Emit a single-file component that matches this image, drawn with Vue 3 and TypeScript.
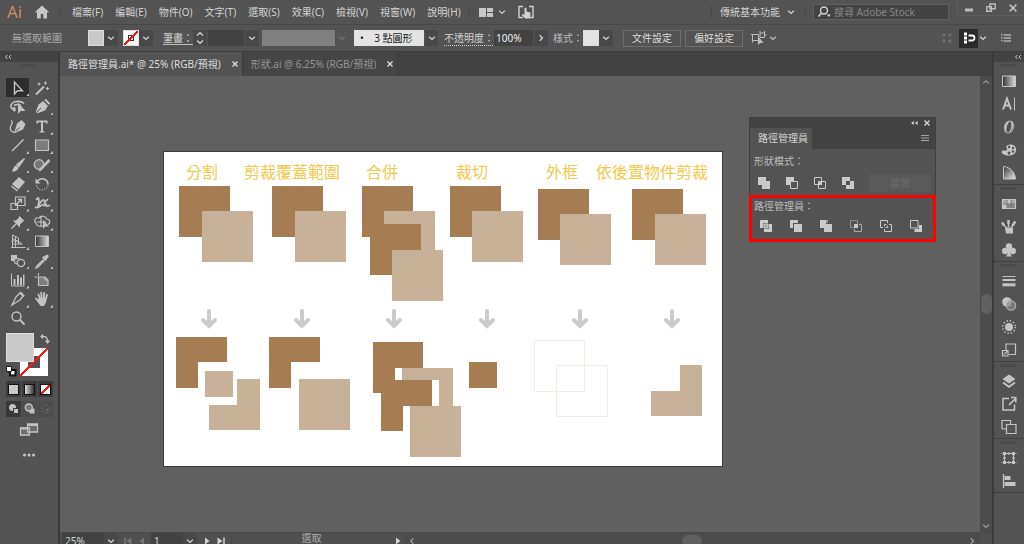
<script setup lang="ts">
import { h, ref } from 'vue'

// Icon bodies, drawn on a square grid whose size is given by the first entry.
const icons: Record<string, [number, string]> = {
  home: [16, '<path d="M8 1.5 0.8 8.2h2.2V14.5h3.7V10h2.6v4.5H13V8.2h2.2z" fill="currentColor"/>'],
  chevron: [8, '<path d="M1.2 2.8 4 5.4 6.8 2.8" fill="none" stroke="currentColor" stroke-width="1.4"/>'],
  chevronUp: [8, '<path d="M1.2 5.4 4 2.8 6.8 5.4" fill="none" stroke="currentColor" stroke-width="1.2"/>'],
  chevronRight: [8, '<path d="M2.8 1.2 5.4 4 2.8 6.8" fill="none" stroke="currentColor" stroke-width="1.4"/>'],
  chevronLeft: [8, '<path d="M5.4 1.2 2.8 4l2.6 2.8" fill="none" stroke="currentColor" stroke-width="1.4"/>'],
  spin: [16, '<path d="M5 5.5 8 2.7l3 2.8M5 10.5l3 2.8 3-2.8" fill="none" stroke="currentColor" stroke-width="1.4"/>'],
  collapse: [8, '<path d="M3.5 2 1.5 4l2 2M7 2 5 4l2 2" fill="none" stroke="currentColor" stroke-width="1"/>'],
  rewind: [8, '<path d="M3.8 2v4L1 4zM7.6 2v4L4.8 4z" fill="currentColor"/>'],
  close: [8, '<path d="M1.5 1.5l5 5M6.5 1.5l-5 5" stroke="currentColor" stroke-width="1.4"/>'],
  minimise: [12, '<path d="M2 6.5h8v3H2z" fill="currentColor"/>'],
  restore: [12, '<path d="M4.8 2h5.4v4.8H4.8zM1.8 4.6h4.6v4.6H1.8z" fill="none" stroke="currentColor" stroke-width="1.4"/>'],
  winClose: [12, '<path d="M2.6 2.6l6.8 6.8M9.4 2.6 2.6 9.4" stroke="currentColor" stroke-width="1.6"/>'],
  arrange: [16, '<path d="M1 4h7v9H1zM9 4h6v4H9zM9 9h6v4H9z" fill="currentColor"/>'],
  touch: [16, '<path d="M5 2.5H1v11h4M11 2.5h4v11h-4" fill="none" stroke="currentColor" stroke-width="1.4"/><path d="M6.500 4q1-1 2 0v3.500l4 1v3L11 14.500H7L3.800 11l1-1 1.700 1z" fill="currentColor"/>'],
  search: [14, '<circle cx="7" cy="5.500" r="3.500" fill="none" stroke="currentColor" stroke-width="1.400"/><path d="M4.500 8 1.500 11.500" stroke="currentColor" stroke-width="1.600"/><path d="M9.800 9.500h4L11.800 12z" fill="currentColor"/>'],
  nudge: [16, '<path d="M1.500 4.500h6v6h-6zM9 3h4.500v4.500H9z" fill="none" stroke="currentColor"/><path d="M0 4.500h3M1.500 10.500v2M9 1v2M13.500 1v2M13.500 5h2" stroke="currentColor"/><path d="M7 6v9l2.300-2h3.200z" fill="currentColor"/>'],
  dots4: [12, '<path d="M1.500 1.500h3v3h-3zM7.500 1.500h3v3h-3zM1.500 7.500h3v3h-3zM7.500 7.500h3v3h-3z" fill="currentColor"/>'],
  magnet: [16, '<path d="M3 2.500h3v3H3zM3 6.500h3v3H3zM3 10.500h3v3H3z" fill="currentColor"/><path d="M7.500 5.500h3.500a2.500 2.500 0 0 1 0 5h-3.500" fill="none" stroke="currentColor" stroke-width="1.800"/>'],
  list: [12, '<path d="M1 2.500h1.500M1 5.500h1.500M1 8.500h1.500M3.500 3h7.500M3.500 6h7.500M3.500 9h7.500" stroke="currentColor" stroke-width="1.300"/>'],
  menu: [12, '<path d="M2 2.500h8M2 5h8M2 7.500h8" stroke="currentColor"/>'],
  // tools
  select: [18, '<path d="M5.500 3v12l3-3.300h5z" fill="none" stroke="currentColor" stroke-width="1.400"/>'],
  wand: [18, '<path d="M3 15.500 11 7.500" stroke="currentColor" stroke-width="2"/><path d="M12.500 2.500v3M11 4h3M6 3.500v3M4.500 5h3M14.500 8v3M13 9.500h3" stroke="currentColor" stroke-width="1.200"/>'],
  lasso: [18, '<path d="M6 12.500C1 11 1 7 3.500 5S12 2.500 15 5.500M5 13.500c2-2 1-4-1-3.500M5 7.500c3-2 5-1 7 0" fill="none" stroke="currentColor" stroke-width="1.600"/><path d="M9 4.500v11.500l2.800-3H16.500z" fill="currentColor"/>'],
  pen: [18, '<path d="M10 3 15 8 12 12.500 4 15.500 2.500 14.500 5.500 6.500z" fill="currentColor"/><path d="M3 15 8 10" stroke="#535353"/><path d="M12 1.500 16.500 6" stroke="currentColor" stroke-width="2"/>'],
  curve: [18, '<path d="M12.500 3 16.500 7 14 12.500 7 15.500 5.500 14.500 8 6.500z" fill="currentColor"/><path d="M6 15 10.500 10.500" stroke="#535353"/><path d="M2 3.500c4 2-3 6 0 10 1 2 3 2 5 1.500" fill="none" stroke="currentColor" stroke-width="1.300"/>'],
  type: [18, '<path d="M3.500 3.500h11v3.200h-1.200l-.5-1.500H10v8.800l1.500.5v1h-5v-1l1.500-.5V5.200H5.200l-.5 1.500H3.500z" fill="currentColor"/>'],
  line: [18, '<path d="M3 15 14.500 3.500" stroke="currentColor" stroke-width="1.400"/>'],
  rect: [18, '<path d="M2.500 4h13v10.500h-13z" fill="#7c7c7c" stroke="currentColor" stroke-width="1.200"/>'],
  brush: [18, '<path d="M15.500 2.500 8 8.500l2 2z" stroke="currentColor" stroke-width="1.300" fill="currentColor"/><path d="M7.300 9.200 9.500 11.400C9 14.500 6 16 2.500 15.500 4.500 14 4 10.500 7.300 9.200z" fill="currentColor"/>'],
  blob: [18, '<circle cx="6" cy="8.500" r="4.800" fill="#777" stroke="currentColor" stroke-width="1.300"/><path d="M16.500 4 8 13 6 14.500" stroke="currentColor" stroke-width="2.600"/>'],
  eraser: [18, '<path d="M10 2 16 7 9.500 14.500 3 9z" fill="currentColor"/><path d="M2.500 11 8.500 16" stroke="currentColor" stroke-width="1.600"/>'],
  rotate: [18, '<path d="M4.500 6C9 1.500 15 4.500 15 9.500" fill="none" stroke="currentColor" stroke-width="1.500"/><path d="M15 10c-1 6-10 7-12-.5" fill="none" stroke="currentColor" stroke-width="1.300" stroke-dasharray="1 1.500"/><path d="M2.500 3.500v5h5z" fill="currentColor"/>'],
  scale: [18, '<path d="M6.500 3h9.500v8.500H6.500zM2 9.500h6.500v6H2z" fill="none" stroke="currentColor" stroke-width="1.200"/><path d="M7 10.500l5-4.500M9 5.500h3.500V9" stroke="currentColor" fill="none" stroke-width="1.300"/>'],
  width: [18, '<path d="M3 6c4-4 3 3 2 6 2-1 2-5 5-6 3-1 0 6 4 4M2 13c3 2 5-1 7-2s5 3 8 0M12 8l3-3" fill="none" stroke="currentColor" stroke-width="1.700"/><circle cx="5" cy="4.500" r="1.500" fill="currentColor"/>'],
  pin: [18, '<path d="M10 2.500l5.500 5.500-1.500.5L11 11.500v3L4 7.500h3L10 4.500z" fill="currentColor"/><path d="M2.500 15.500 8 10" stroke="currentColor" stroke-width="1.500"/>'],
  shape: [18, '<path d="M3 10C0 7 3 4 6 5c2-3 7-2 7.500 1 4 0 4 5 1 5.500M3 10c0 3 4 4 7 3M4 9h9M8 4v9" fill="none" stroke="currentColor" stroke-width="1.200"/><path d="M10 7v9l2.300-2.500H16z" fill="currentColor"/>'],
  perspective: [18, '<path d="M3.500 3v12M3.500 3l6 3v6M3.500 6.500l9 5M2 15.500h14.500M3.500 12h10M6.500 5v10M2.500 9h7" fill="none" stroke="currentColor"/>'],
  gradient: [18, '<path d="M2.500 4h13v10.500h-13z" fill="url(#ramp)" stroke="currentColor"/>'],
  blend: [18, '<path d="M2 3h6v6H2z" fill="currentColor"/><circle cx="8" cy="9" r="3" fill="#777" stroke="currentColor"/><circle cx="12" cy="11" r="3.600" fill="#535353" stroke="currentColor" stroke-width="1.300"/>'],
  dropper: [18, '<path d="M10.500 7.500 4 14l-1 2 2-1 6.500-6.500" fill="none" stroke="currentColor" stroke-width="1.300"/><path d="M9 5.500 10.500 4 14 7.500 12.500 9zM11 5l2.500-2.500q3 .5 2 2.500L13.500 7.500z" fill="currentColor"/>'],
  graph: [18, '<path d="M2.500 2.500v12.500h13" fill="none" stroke="currentColor"/><path d="M4.500 8h2v6h-2zM8 4h2v10H8zM11 6.500h2v7.500h-2zM14 3.500h1.500V14H14z" fill="currentColor"/>'],
  artboard: [18, '<path d="M5.500 6H12l3 3v5.500H5.500z" fill="#7c7c7c" stroke="currentColor" stroke-width="1.200"/><path d="M1.500 6h3M5.500 2v3M12 6v3h3" stroke="currentColor" fill="none"/>'],
  slice: [18, '<path d="M11.500 2.500l3 3L11 10 6 13l-3 2 2-4 2-4z" fill="none" stroke="currentColor" stroke-width="1.300"/><path d="M11 2.500 15 6.500" stroke="currentColor" stroke-width="2.200"/>'],
  hand: [18, '<path d="M5.500 4.500 7 9M8.200 2.800 8.700 9M11.200 3l-.4 6M14 5l-1.500 5M3 8.500 6 12" stroke="currentColor" stroke-width="1.900" stroke-linecap="round"/><path d="M6 8h7.500L13 12.500 11 16H7.500L4 11z" fill="currentColor"/>'],
  zoom: [18, '<circle cx="7.500" cy="7.500" r="4.500" fill="none" stroke="currentColor" stroke-width="1.400"/><path d="M11 11l4.500 4.500" stroke="currentColor" stroke-width="2"/>'],
  swap: [12, '<path d="M3 3.500c4-.5 5.500 1 5.500 5" fill="none" stroke="currentColor" stroke-width="1.500"/><path d="M4 .8v5.400L1 3.500zM5.800 7.500h5.400L8.500 11z" fill="currentColor"/>'],
  defaults: [12, '<path d="M5 5h5.500v5.500H5z" fill="#fff" stroke="#111" stroke-width="2"/><path d="M1.500 1.500h5v5h-5z" fill="#fff" stroke="#222"/>'],
  drawNormal: [16, '<circle cx="6.500" cy="6.500" r="3.500" fill="currentColor"/><path d="M7.500 7.500h5v5h-5z" fill="currentColor" stroke="#3a3a3a"/>'],
  drawBehind: [16, '<path d="M7.500 7.500h5v5h-5z" fill="currentColor"/><circle cx="6.800" cy="6.500" r="3.500" fill="#777" stroke="currentColor" stroke-width="1.400"/>'],
  drawInside: [16, '<circle cx="8" cy="8" r="4" fill="none" stroke="currentColor" stroke-dasharray="2 1"/><path d="M8 8h2v2H8z" fill="currentColor"/>'],
  screen: [20, '<path d="M1.500 8h9v7h-9zM8.500 4h10v8h-10z" fill="#6c6c6c" stroke="currentColor" stroke-width="1.300"/><path d="M1 8.500h7M8 5h11" stroke="currentColor" stroke-width="2"/>'],
  more: [16, '<circle cx="3.500" cy="8" r="1.600" fill="currentColor"/><circle cx="8" cy="8" r="1.600" fill="currentColor"/><circle cx="12.500" cy="8" r="1.600" fill="currentColor"/>'],
  // dock
  character: [18, '<path d="M3 14.500 7 3.500l4 11M4.500 10.500h5" fill="none" stroke="currentColor" stroke-width="1.900"/><path d="M14.500 2.500v13" stroke="currentColor"/>'],
  opentype: [18, '<ellipse cx="9" cy="9" rx="4.500" ry="6" transform="rotate(15 9 9)" fill="none" stroke="#999" stroke-width="1.400"/><path d="M10.500 3c4 .5 4 8.500-2.500 12 4-4 4-8 2.500-12zM10 3c-5 0-7.500 9-3 12-1.500-4 0-9 3-12z" fill="currentColor"/>'],
  palette: [18, '<path d="M7 4.500C11 2 16 4 16.200 8.500c.2 4-4 6.500-8.200 6C4 14.500.5 12 2 10c1.500-1.500 4 .5 5-1s-2-3 0-4.500z" fill="currentColor"/><circle cx="9" cy="6" r="1.200" fill="#535353"/><circle cx="13" cy="7" r="1.200" fill="#535353"/><circle cx="13" cy="10.500" r="1.200" fill="#535353"/><circle cx="9" cy="12" r="1.500" fill="#535353"/>'],
  guide: [18, '<path d="M3.500 2.500v12.500h12C15 8 10 3 3.500 2.500z" fill="url(#fan)" stroke="currentColor"/>'],
  swatches: [18, '<path d="M2.500 4.500h13v9h-13z" fill="#888" stroke="currentColor" stroke-width="1.200"/><path d="M3 5h4v4H3zM11.500 5h3.500v4h-3.500z" fill="#aaa"/><path d="M7 5h4v4H7zM3 9h4v4H3z" fill="#c4c4c4"/><path d="M3 9h12M7 5v8M11.200 5v8" stroke="#777"/>'],
  brushes: [18, '<path d="M5 9.500h8v6h-7z" fill="currentColor"/><path d="M6.500 10 3 6M8.500 9V5M11 9.500l3.500-4.500" stroke="currentColor" stroke-width="1.400"/><path d="M4 7.500 2 4.500M8.500 6V2M12.500 7.500l3-4" stroke="currentColor" stroke-width="2.400"/>'],
  club: [18, '<circle cx="9" cy="5.500" r="3.200" fill="currentColor"/><circle cx="5.200" cy="10" r="3.200" fill="currentColor"/><circle cx="12.800" cy="10" r="3.200" fill="currentColor"/><path d="M8 7h2v5l2 3.500H6L8 12z" fill="currentColor"/>'],
  stroke: [18, '<path d="M2.500 4.500h13" stroke="currentColor" stroke-width="1"/><path d="M2.500 8h13" stroke="currentColor" stroke-width="2"/><path d="M2.500 12.800h13" stroke="currentColor" stroke-width="3"/>'],
  transparency: [18, '<circle cx="7" cy="7" r="4.800" fill="currentColor"/><circle cx="11" cy="10.500" r="4.700" fill="#8c8c8c" fill-opacity=".7" stroke="#aaa" stroke-width="1.200"/>'],
  appearance: [18, '<circle cx="9" cy="9" r="4" fill="currentColor"/><circle cx="9" cy="9" r="6.300" fill="none" stroke="currentColor" stroke-width="1.500" stroke-dasharray="1.300 2"/>'],
  styles: [18, '<path d="M6 9V3h9.500v10.500H9M2.500 9.500H8V15H2.500z" fill="none" stroke="currentColor" stroke-width="1.200"/><path d="M4 13.500l4-4" fill="none" stroke="currentColor" stroke-width="1.100"/>'],
  layers: [18, '<path d="M9 2.500 15.500 7 9 11.500 2.500 7z" fill="currentColor"/><path d="M3 10.500 9 14.800l6-4.300" fill="none" stroke="currentColor" stroke-width="1.900"/>'],
  assets: [18, '<path d="M9 3.500H3v11.500h11.500V9.500" fill="none" stroke="currentColor" stroke-width="1.500"/><path d="M9 10l6-6M11 2.500h4.700v5" fill="none" stroke="currentColor" stroke-width="1.700"/>'],
  artboards: [18, '<path d="M6 11H2V2.500h8.500V6M6.500 6.500H16v9H6.500z" fill="none" stroke="currentColor" stroke-width="1.200"/>'],
  transform: [18, '<path d="M4.500 4.500h9v9h-9z" fill="none" stroke="currentColor" stroke-width="1.200"/><path d="M3 3h3v3H3zM12 3h3v3h-3zM3 12h3v3H3zM12 12h3v3h-3zM8 3.500h2v2H8zM8 12.500h2v2H8zM3.500 8h2v2h-2zM12.500 8h2v2h-2zM1.500 4h1v1h-1zM15.500 4h1v1h-1zM1.500 13h1v1h-1zM15.500 13h1v1h-1z" fill="currentColor"/>'],
  align: [18, '<path d="M3.500 2v14" stroke="currentColor" stroke-width="1.300"/><path d="M4.500 4h6v4h-6zM4.500 10h11v4h-11z" fill="currentColor"/>'],
  // pathfinder operations
  unite: [12, '<path d="M0 0h8v4h4v8H4V8H0z" fill="currentColor"/>'],
  minusFront: [12, '<path d="M0 0h8v4H4v4H0z" fill="currentColor"/><path d="M4.500 4.500h7v7h-7z" fill="none" stroke="currentColor"/>'],
  intersect: [12, '<path d="M.5.500h7v7h-7zM4.500 4.500h7v7h-7z" fill="none" stroke="currentColor"/><path d="M5 5h3v3H5z" fill="currentColor"/>'],
  exclude: [12, '<path d="M0 0h8v4h4v8H4V8H0zM4 4v4h4V4z" fill="currentColor" fill-rule="evenodd"/>'],
  divide: [12, '<path d="M0 0h8v3H3v5H0zM12 12H4V9h5V4h3z" fill="currentColor"/><path d="M3.500 3.500h5v5h-5z" fill="#999" stroke="#5c5c5c"/><path d="M4 4h4v4H4z" fill="#a8a8a8" stroke="currentColor"/>'],
  trim: [12, '<path d="M0 0h8v3H3v5H0zM4 4h8v8H4z" fill="currentColor"/>'],
  merge: [12, '<path d="M0 0h6v4h6v8H4V8H0z" fill="currentColor"/><path d="M6 0h2v3H6z" fill="#999"/>'],
  crop: [12, '<path d="M.5.500h7v7h-7z" fill="none" stroke="#909090"/><path d="M9 4.500h2.500v7h-7V9" fill="none" stroke="#aaa"/><path d="M4 4h4v4H4z" fill="currentColor"/>'],
  outline: [12, '<path d="M3 7.500H.5v-7h7V3M9 4.500h2.500v7h-7V9M4.500 6.500v-2h2M7.500 5.500v2h-2" fill="none" stroke="currentColor"/>'],
  minusBack: [12, '<path d="M.5.500h7.500v7.500H.5z" fill="none" stroke="currentColor"/><path d="M9 5h3v7H4.500V9H9z" fill="currentColor"/>'],
  first: [10, '<path d="M2 1.500v7" stroke="currentColor" stroke-width="1.500"/><path d="M8.500 1.500v7L3.500 5z" fill="currentColor"/>'],
  prev: [10, '<path d="M7 1.500v7L2.500 5z" fill="currentColor"/>'],
  next: [10, '<path d="M3 1.500v7L7.500 5z" fill="currentColor"/>'],
  last: [10, '<path d="M8 1.500v7" stroke="currentColor" stroke-width="1.500"/><path d="M1.500 1.500v7l5-3.500z" fill="currentColor"/>'],
}

const Icon = (props: { name: string; size?: number }) => {
  const [grid, body] = icons[props.name]
  const side = props.size ?? grid
  return h('svg', { viewBox: `0 0 ${grid} ${grid}`, width: side, height: side, 'aria-hidden': 'true', innerHTML: body })
}
Icon.props = ['name', 'size']

const menus = ['檔案(F)', '編輯(E)', '物件(O)', '文字(T)', '選取(S)', '效果(C)', '檢視(V)', '視窗(W)', '說明(H)']

const tools = [
  'select', 'wand', 'lasso', 'pen', 'curve', 'type', 'line', 'rect', 'brush', 'blob', 'eraser', 'rotate', 'scale',
  'width', 'pin', 'shape', 'perspective', 'gradient', 'blend', 'dropper', 'graph', 'artboard', 'slice', 'hand', 'zoom',
]
const plainTools = ['wand', 'lasso', 'curve', 'gradient', 'artboard', 'zoom']
const activeTool = ref('select')

const dock = [
  ['gradient', 'character', 'opentype', 'palette', 'guide'],
  ['swatches', 'brushes', 'club'],
  ['stroke', 'transparency', 'appearance', 'styles'],
  ['layers', 'assets', 'artboards'],
  ['transform', 'align'],
]

const shapeModes = ['unite', 'minusFront', 'intersect', 'exclude']
const pathfinders = ['divide', 'trim', 'merge', 'crop', 'outline', 'minusBack']

const labels = [
  { x: 38, text: '分割' },
  { x: 128, text: '剪裁覆蓋範圍' },
  { x: 218, text: '合併' },
  { x: 308, text: '裁切' },
  { x: 398, text: '外框' },
  { x: 488, text: '依後置物件剪裁' },
]
const arrows = [45, 138, 230, 323, 416, 508]
const squares = [
  { x: 15, y: 34, tone: 'dark' }, { x: 38, y: 59, tone: 'light' },
  { x: 108, y: 34, tone: 'dark' }, { x: 131, y: 59, tone: 'light' },
  { x: 198, y: 34, tone: 'dark' }, { x: 220, y: 59, tone: 'light' },
  { x: 206, y: 72, tone: 'dark' }, { x: 228, y: 98, tone: 'light' },
  { x: 286, y: 34, tone: 'dark' }, { x: 308, y: 59, tone: 'light' },
  { x: 374, y: 37, tone: 'dark' }, { x: 396, y: 62, tone: 'light' },
  { x: 468, y: 37, tone: 'dark' }, { x: 491, y: 62, tone: 'light' },
  { x: 135, y: 227, tone: 'light' },
]
</script>

<template>
  <div class="app">
    <svg class="defs" width="0" height="0" aria-hidden="true">
      <defs>
        <linearGradient id="ramp"><stop offset="0" stop-color="#333" /><stop offset="1" stop-color="#ddd" /></linearGradient>
        <linearGradient id="fan" x1="0" y1="0" x2="1" y2="1"><stop offset="0" stop-color="#333" /><stop offset="1" stop-color="#eee" /></linearGradient>
      </defs>
    </svg>

    <header class="menubar">
      <span class="logo">Ai</span>
      <button class="home" aria-label="首頁"><Icon name="home" /></button>
      <nav class="menus">
        <a v-for="m in menus" :key="m" href="#">{{ m }}</a>
      </nav>
      <button class="arrange" aria-label="排列文件"><Icon name="arrange" /><Icon name="chevron" /></button>
      <button aria-label="觸控工作區"><Icon name="touch" /></button>
      <button class="workspace">傳統基本功能<Icon name="chevron" /></button>
      <label class="search"><Icon name="search" /><input type="search" placeholder="搜尋 Adobe Stock" aria-label="搜尋 Adobe Stock" /></label>
      <div class="window">
        <button aria-label="最小化"><Icon name="minimise" /></button>
        <button aria-label="還原"><Icon name="restore" /></button>
        <button aria-label="關閉"><Icon name="winClose" /></button>
      </div>
    </header>

    <section class="controls" aria-label="控制">
      <span class="state">無選取範圍</span>
      <button class="swatch" aria-label="填色"><i class="chip grey"></i><b class="drop"><Icon name="chevron" /></b></button>
      <button class="swatch" aria-label="筆畫顏色"><i class="chip none"></i><b class="drop"><Icon name="chevron" /></b></button>
      <label class="name strong" for="weight">筆畫：</label>
      <div class="weight">
        <button class="drop" aria-label="調整筆畫"><Icon name="spin" /></button>
        <input id="weight" type="text" />
        <button class="drop" aria-label="筆畫寬度"><Icon name="chevron" /></button>
      </div>
      <button class="swatch profile" disabled aria-label="寬度描述檔"><i></i><b class="drop"><Icon name="chevron" /></b></button>
      <div class="combo brushes">
        <select aria-label="筆刷定義"><option>•&nbsp;&nbsp;&nbsp; 3 點圓形</option></select>
        <b class="drop"><Icon name="chevron" /></b>
      </div>
      <label class="name dotted" for="opacity">不透明度：</label>
      <div class="opacity">
        <input id="opacity" type="text" value="100%" />
        <button class="drop" aria-label="不透明度滑桿"><Icon name="chevronRight" /></button>
      </div>
      <span class="name style">樣式：</span>
      <button class="swatch" aria-label="樣式"><i class="chip pale"></i><b class="drop"><Icon name="chevron" /></b></button>
      <button class="action first">文件設定</button>
      <button class="action">偏好設定</button>
      <button class="nudge" aria-label="選取類似物件"><Icon name="nudge" /><Icon name="chevron" /></button>
      <div class="ends">
        <span class="faint"><Icon name="dots4" /></span>
        <button class="magnet" aria-label="靠齊"><Icon name="magnet" /></button>
        <button aria-label="靠齊選項"><Icon name="chevron" /></button>
        <button class="list" aria-label="選單"><Icon name="list" /></button>
      </div>
    </section>

    <main class="body">
      <aside class="toolbox">
        <div class="strip"><Icon name="collapse" /></div>
        <div class="grip"></div>
        <div class="tools">
          <button
            v-for="t in tools" :key="t" :aria-label="t"
            :class="{ active: t === activeTool, nested: !plainTools.includes(t) }" @click="activeTool = t"
          ><Icon :name="t" /></button>
        </div>
        <div class="paint">
          <button class="stroke-well" aria-label="筆畫"></button>
          <button class="fill-well" aria-label="填色"></button>
          <button class="swap" aria-label="切換"><Icon name="swap" /></button>
          <button class="defaults" aria-label="預設"><Icon name="defaults" /></button>
        </div>
        <div class="trio modes">
          <button aria-label="顏色"><i class="m-color"></i></button>
          <button aria-label="漸層"><i class="m-ramp"></i></button>
          <button aria-label="無"><i class="m-none"></i></button>
        </div>
        <div class="trio draw">
          <button class="on" aria-label="一般繪製"><Icon name="drawNormal" /></button>
          <button aria-label="繪製下層"><Icon name="drawBehind" /></button>
          <button class="off" aria-label="繪製內側"><Icon name="drawInside" /></button>
        </div>
        <button class="wide" aria-label="螢幕模式"><Icon name="screen" /></button>
        <button class="wide more" aria-label="編輯工具列"><Icon name="more" /></button>
      </aside>

      <section class="document">
        <div class="tabs">
          <div class="tab current"><span>路徑管理員.ai* @ 25% (RGB/預視)</span><button aria-label="關閉"><Icon name="close" /></button></div>
          <div class="tab"><span>形狀.ai @ 6.25% (RGB/預視)</span><button aria-label="關閉"><Icon name="close" /></button></div>
        </div>

        <div class="viewport">
          <div class="canvas">
            <svg class="artboard" viewBox="0 0 558 314" width="558" height="314" role="img" aria-label="路徑管理員">
              <text v-for="l in labels" :key="l.text" :x="l.x" y="26" class="label">{{ l.text }}</text>
              <rect v-for="(s, i) in squares" :key="i" :x="s.x" :y="s.y" width="51" height="51" :class="s.tone" />
              <path v-for="a in arrows" :key="a" class="arrow" :d="`M${a} 159v14M${a - 6} 168l6 6 6-6`" />
              <path class="dark" d="M12 185h51v25H34v26H12zM105 185h51v25h-29v26h-22z" />
              <path class="light" d="M41 219h28v26H41zM73 227h23v51H45v-25h28z" />
              <path class="dark" d="M209 190h50v26h-28v12h37v26h-29v25h-22v-38h-8z" />
              <path class="light" d="M238 216h51v38h8v51h-51v-51h29v-26h-37z" />
              <path class="dark" d="M305 210h28v26h-28z" />
              <path class="thin" d="M370.500 188.500h50v51h-50zM392.500 213.500h51v51h-51z" />
              <path class="light" d="M516 213h22v51h-51v-25h29z" />
            </svg>

            <section class="panel" aria-label="路徑管理員">
              <div class="panel-top">
                <button aria-label="收合"><Icon name="rewind" /></button>
                <button aria-label="關閉"><Icon name="close" /></button>
              </div>
              <div class="panel-tabs">
                <span class="panel-tab">路徑管理員</span>
                <button aria-label="面板選單"><Icon name="menu" /></button>
              </div>
              <div class="panel-group">
                <h3>形狀模式：</h3>
                <div class="ops modes-row">
                  <button v-for="s in shapeModes" :key="s" :aria-label="s"><Icon :name="s" /></button>
                  <button class="expand" disabled>展開</button>
                </div>
              </div>
              <div class="panel-group marked">
                <h3>路徑管理員：</h3>
                <div class="ops finder-row">
                  <button v-for="p in pathfinders" :key="p" :aria-label="p"><Icon :name="p" /></button>
                </div>
              </div>
            </section>
          </div>
          <div class="vscroll"><Icon name="chevronUp" /><i></i><Icon name="chevron" /></div>
        </div>

        <footer class="status">
          <div class="status-row">
            <div class="combo zoom"><select aria-label="縮放"><option>25%</option></select><b class="drop"><Icon name="chevron" /></b></div>
            <button class="dim" aria-label="第一個"><Icon name="first" /></button>
            <button class="dim" aria-label="上一個"><Icon name="prev" /></button>
            <div class="combo page"><select aria-label="工作區域"><option>1</option></select><b class="drop"><Icon name="chevron" /></b></div>
            <button aria-label="下一個"><Icon name="next" /></button>
            <button aria-label="最後一個"><Icon name="last" /></button>
            <span class="mode">選取</span>
            <button class="play" aria-label="狀態選單"><Icon name="next" /></button>
            <div class="hscroll"><Icon name="chevronLeft" /><i></i><Icon name="chevronRight" /></div>
          </div>
        </footer>
      </section>

      <aside class="dock">
        <div class="strip"><Icon name="collapse" /></div>
        <div v-for="(group, i) in dock" :key="i" class="dock-group">
          <div class="grip"></div>
          <button v-for="d in group" :key="d" :aria-label="d"><Icon :name="d" /></button>
        </div>
      </aside>
    </main>
  </div>
</template>

<style>
body { background: #535353; overflow: hidden; }
</style>

<style scoped>
.app { display: flex; flex-direction: column; height: 100vh; overflow: hidden; background: #535353; color: #d2d2d2; font: 10px/14px "Noto Sans", "Noto Sans CJK TC", sans-serif; }
.app * { box-sizing: border-box; }
.defs { position: absolute; }
button, input, select { font: inherit; color: inherit; background: none; border: 0; padding: 0; margin: 0; border-radius: 0; outline: 0; }
button { display: flex; align-items: center; justify-content: center; flex: none; }
a { color: inherit; text-decoration: none; white-space: nowrap; }
svg { flex: none; display: block; }

.menubar { display: flex; align-items: center; height: 25px; flex: none; border-bottom: 1px solid #474747; padding-left: 7px; }
.logo { width: 27px; font: 17px/22px "Open Sans", sans-serif; color: #cf8d67; }
.home { width: 16px; color: #c8c8c8; }
.menus { display: flex; gap: 12px; margin-left: 9px; padding: 0 8px 0 12px; border-left: 1px solid #484848; border-right: 1px solid #484848; }
.arrange { margin: 0 12px 0 8px; gap: 4px; color: #c8c8c8; }
.workspace { margin-left: auto; gap: 7px; padding: 0 10px 0 8px; border-left: 1px solid #484848; border-right: 1px solid #484848; }
.search { display: flex; align-items: center; width: 136px; height: 16px; margin: 0 8px 0 7px; padding-left: 3px; gap: 3px; background: #434343; border: 1px solid #606060; }
.search input { width: 100%; min-width: 0; }
.search input::placeholder { color: #868686; opacity: 1; }
.window { display: flex; align-items: flex-end; align-self: flex-start; border: 1px solid #5e5e5e; border-top: 0; border-right: 0; height: 16px; color: #bdbdbd; }
.window button { width: 22px; height: 15px; }

.controls { display: flex; align-items: center; height: 27px; flex: none; border-bottom: 1px solid #3c3c3c; padding-left: 12px; white-space: nowrap; }
.state { width: 76px; color: #a9a9a9; }
.drop { display: flex; align-items: center; justify-content: center; width: 14px; height: 16px; background: #484848; flex: none; }
.swatch { height: 16px; margin-right: 5px; }
.chip { width: 16px; height: 16px; border: 1px solid #dedede; background: #c9c9c9; }
.chip.pale { background: #e3e3e3; }
.chip.none { background: linear-gradient(to bottom right, transparent 45%, #f01818 45% 55%, transparent 55%), linear-gradient(#fff, #fff) center / 4px 4px no-repeat, linear-gradient(#333, #333) center / 6px 6px no-repeat, #fff; }
.name { color: #bcbcbc; }
.strong { margin-left: 5px; width: 30px; font-weight: bold; text-decoration: underline; text-underline-offset: 2px; }
.weight, .opacity { display: flex; gap: 1px; height: 16px; }
.weight input { width: 36px; background: #424242; }
.weight { margin-right: 3px; }
.profile i { width: 73px; height: 16px; background: #808080; }
.profile .drop { background: none; color: #747474; }
.combo { position: relative; height: 16px; flex: none; }
.combo select { appearance: none; width: 100%; height: 16px; padding: 0 16px 0 3px; line-height: 16px; }
.combo .drop { position: absolute; right: 0; top: 0; }
.brushes { width: 84px; margin-right: 6px; }
.brushes select { background: #e3e3e3; color: #222; padding-left: 6px; }
.brushes .drop { border-left: 1px solid #535353; }
.dotted { width: 50px; text-decoration: underline dotted; text-underline-offset: 3px; color: #d2d2d2; }
.opacity input { width: 39px; background: #424242; padding-left: 2px; color: #eee; }
.style { margin-left: 5px; width: 30px; }
.action { height: 17px; width: 58px; border: 1px solid #6d6d6d; margin-right: 4px; color: #dedede; }
.action.first { margin-left: 5px; }
.nudge { margin-left: 4px; gap: 2px; color: #bdbdbd; }
.ends { display: flex; align-items: center; margin-left: auto; }
.faint { color: #6f6f6f; margin-right: 6px; }
.magnet { width: 19px; height: 19px; background: #2b2b2b; color: #fff; margin-right: 1px; }
.list { margin: 0 12px 0 13px; color: #b0b0b0; }

.body { display: flex; flex: 1; min-height: 0; }
.toolbox { width: 60px; flex: none; border-right: 2px solid #3a3a3a; display: flex; flex-direction: column; color: #c2c2c2; }
.strip { height: 10px; background: #434343; display: flex; align-items: center; padding-left: 4px; flex: none; }
.grip { width: 16px; height: 3px; margin: 2px auto; background: repeating-linear-gradient(90deg, #424242 0 1px, #535353 1px 2px); flex: none; }
.tools { display: grid; grid-template-columns: 23px 23px; grid-auto-rows: 1fr; column-gap: 1px; height: 250px; margin: 9px 0 0 6px; flex: none; }
.tools button { position: relative; }
.tools .active { background: #2d2d2d; }
.tools .nested::after { content: ""; position: absolute; right: 0; bottom: 1px; width: 3px; height: 3px; background: #c2c2c2; clip-path: polygon(100% 0, 100% 100%, 0 100%); }
.paint { position: relative; height: 44px; margin: 5px 6px 0; flex: none; }
.paint button { position: absolute; }
.fill-well { left: 0; top: 0; width: 28px; height: 29px; background: #c9c9c9; border: 1px solid #ddd; }
.stroke-well { left: 14px; top: 15px; width: 28px; height: 28px; background: linear-gradient(to bottom right, transparent 47%, #f01818 47% 53%, transparent 53%), linear-gradient(#535353, #535353) center / 12px 12px no-repeat, #fff; }
.swap { right: 1px; top: 0; }
.defaults { left: -1px; top: 32px; }
.trio { display: flex; gap: 1px; margin: 4px 0 0 6px; flex: none; }
.trio button { width: 15px; height: 16px; background: #3b3b3b; }
.modes i { width: 11px; height: 11px; border: 1px solid #111; background: #c9c9c9; }
.modes .m-ramp { background: linear-gradient(90deg, #ddd, #333); }
.modes .m-none { background: linear-gradient(to bottom right, transparent 40%, #f01818 40% 60%, transparent 60%), #fff; }
.draw button { background: #4c4c4c; }
.draw .on { background: #383838; }
.draw .off { color: #6a6a6a; }
.wide { align-self: center; margin-top: 3px; }
.more { margin-top: 7px; }

.document { flex: 1; min-width: 0; display: flex; flex-direction: column; }
.tabs { display: flex; height: 24px; background: #424242; flex: none; }
.tab { display: flex; align-items: center; gap: 10px; padding: 0 3px 0 8px; border-right: 1px solid #3c3c3c; color: #969696; background: #454545; white-space: nowrap; }
.tab.current { background: #535353; color: #dcdcdc; }
.tab button { color: #dcdcdc; }
.viewport { display: flex; flex: 1; min-height: 0; }
.canvas { position: relative; flex: 1; background: #606060; overflow: hidden; }
.artboard { position: absolute; left: 103px; top: 75px; box-sizing: content-box !important; background: #fff; border: 1px solid #3c3c3c; }
.label { font: 16px "Noto Sans CJK TC", sans-serif; fill: #f2c94c; text-anchor: middle; }
.dark { fill: #a67c52; }
.light { fill: #c7b299; }
.thin { fill: none; stroke: #f1ece5; }
.arrow { fill: none; stroke: #cbcbcb; stroke-width: 4; stroke-linecap: round; }

.panel { position: absolute; left: 689px; top: 41px; width: 187px; background: #535353; border: 1px solid #3f3f3f; }
.panel-top { display: flex; justify-content: flex-end; gap: 5px; height: 10px; padding-right: 4px; background: #434343; }
.panel-tabs { display: flex; justify-content: space-between; height: 21px; background: #434343; }
.panel-tab { padding: 0 4px 0 8px; line-height: 20px; background: #535353; }
.panel-tabs button { margin-right: 4px; color: #a5a5a5; }
.panel-group { height: 46px; padding: 5px 4px 0; }
.panel-group h3 { margin: 0; font-size: 10px; line-height: 14px; font-weight: normal; color: #bdbdbd; }
.ops { display: flex; align-items: center; height: 18px; margin-top: 6px; color: #cacaca; }
.modes-row button { width: 28px; }
.modes-row { margin-left: -4px; }
.modes-row button.expand { width: 62px; height: 18px; margin: 0 0 0 auto; background: #595959; color: #6e6e6e; }
.marked { border: 3px solid #ff0000; margin: 0 -1px -1px; padding: 1px 2px 0; height: 47px; }
.finder-row { margin: 4px 0 0 -3px; }
.finder-row button { width: 30px; }

.vscroll { width: 12px; background: #4b4b4b; display: flex; flex-direction: column; align-items: center; justify-content: space-between; padding: 2px 0; color: #999; }
.vscroll i { width: 11px; height: 20px; border-radius: 6px; background: #616161; }
.status { height: 12px; overflow: hidden; flex: none; background: #4f4f4f; border-top: 1px solid #484848; }
.status-row { display: flex; align-items: center; height: 16px; }
.combo.zoom { width: 56px; margin: 0 3px 0 2px; }
.combo.zoom select, .combo.page select { background: #424242; }
.combo.page { width: 46px; margin: 0 3px 0 2px; }
.status button { width: 14px; }
.dim { color: #777; }
.mode { flex: none; align-self: flex-start; line-height: 11px; width: 160px; margin-left: 3px; border-left: 1px solid #464646; text-align: center; color: #ababab; }
.hscroll { flex: 1; display: flex; align-items: center; justify-content: space-between; height: 16px; background: #4b4b4b; margin-right: 12px; padding: 0 4px 0 3px; color: #999; }
.hscroll i { width: 20px; height: 12px; border-radius: 6px; background: #616161; }

.dock { width: 32px; flex: none; border-left: 2px solid #3a3a3a; color: #c4c4c4; }
.dock .strip { justify-content: flex-end; padding-right: 2px; }
.dock-group { border-bottom: 1px solid #404040; }
.dock-group button { width: 30px; height: 23px; }
</style>
